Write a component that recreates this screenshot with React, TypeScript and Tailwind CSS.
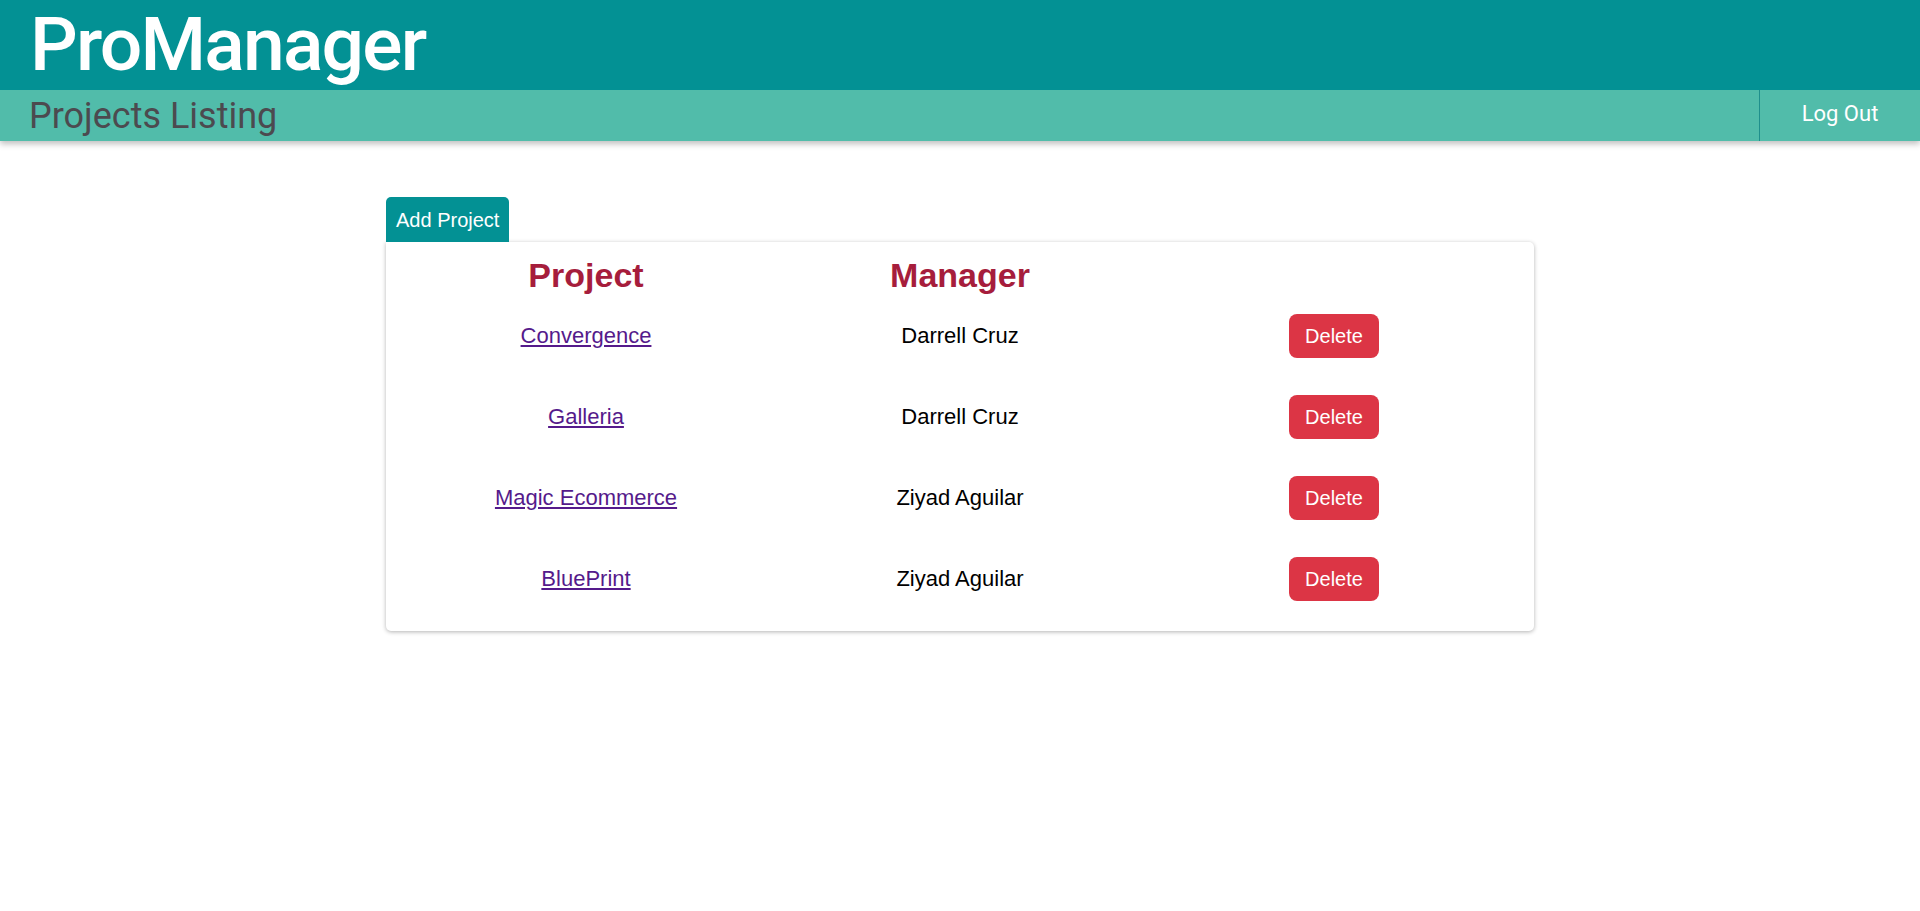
const projects = [
  { name: "Convergence", manager: "Darrell Cruz" },
  { name: "Galleria", manager: "Darrell Cruz" },
  { name: "Magic Ecommerce", manager: "Ziyad Aguilar" },
  { name: "BluePrint", manager: "Ziyad Aguilar" },
]

function Header() {
  return (
    <header className="relative z-10 shadow-[0_3px_6px_rgba(0,0,0,0.25)] font-['Roboto',sans-serif]">
      <div className="h-[90px] bg-[#039194] pl-[30px]">
        <h1 className="text-[75px] leading-[88px] font-medium tracking-[-1.8px] text-white">ProManager</h1>
      </div>
      <div className="flex h-[51px] bg-[#51bcaa]">
        <div className="flex flex-1 items-center pl-[29px]">
          <h2 className="text-[36px] leading-none text-[#4c4a4f]">Projects Listing</h2>
        </div>
        <button
          className="flex w-[161px] cursor-pointer items-center justify-center border-l border-[#1f8f8c] pb-[4px] text-[22px] leading-none text-white"
          type="button"
        >
          Log Out
        </button>
      </div>
    </header>
  )
}

export default function App() {
  return (
    <div className="min-h-screen bg-white font-['Liberation_Sans',Arial,sans-serif]">
      <Header />

      <main className="mx-auto mt-[56px] w-[1148px]">
        <button
          className="h-[45px] cursor-pointer rounded-t-[5px] bg-[#039194] px-[10px] text-[20px] text-white"
          type="button"
        >
          Add Project
        </button>

        <div className="rounded-b-[5px] rounded-tr-[5px] bg-white px-[13px] pt-[14px] pb-[12px] shadow-[0_1px_4px_rgba(0,0,0,0.3)]">
          <div className="grid h-[39px] grid-cols-3 text-center text-[34px] leading-[39px] font-bold text-[#a61d3c]">
            <div>Project</div>
            <div>Manager</div>
            <div />
          </div>

          {projects.map((p) => (
            <div className="grid h-[81px] grid-cols-3 items-center text-center text-[22px]" key={p.name}>
              <div>
                <a className="text-[#551a8b] underline" href="#">
                  {p.name}
                </a>
              </div>
              <div className="text-black">{p.manager}</div>
              <div className="flex justify-center">
                <button
                  className="h-[44px] w-[90px] cursor-pointer rounded-[8px] bg-[#dc3545] text-[20px] text-white"
                  type="button"
                >
                  Delete
                </button>
              </div>
            </div>
          ))}
        </div>
      </main>
    </div>
  )
}
